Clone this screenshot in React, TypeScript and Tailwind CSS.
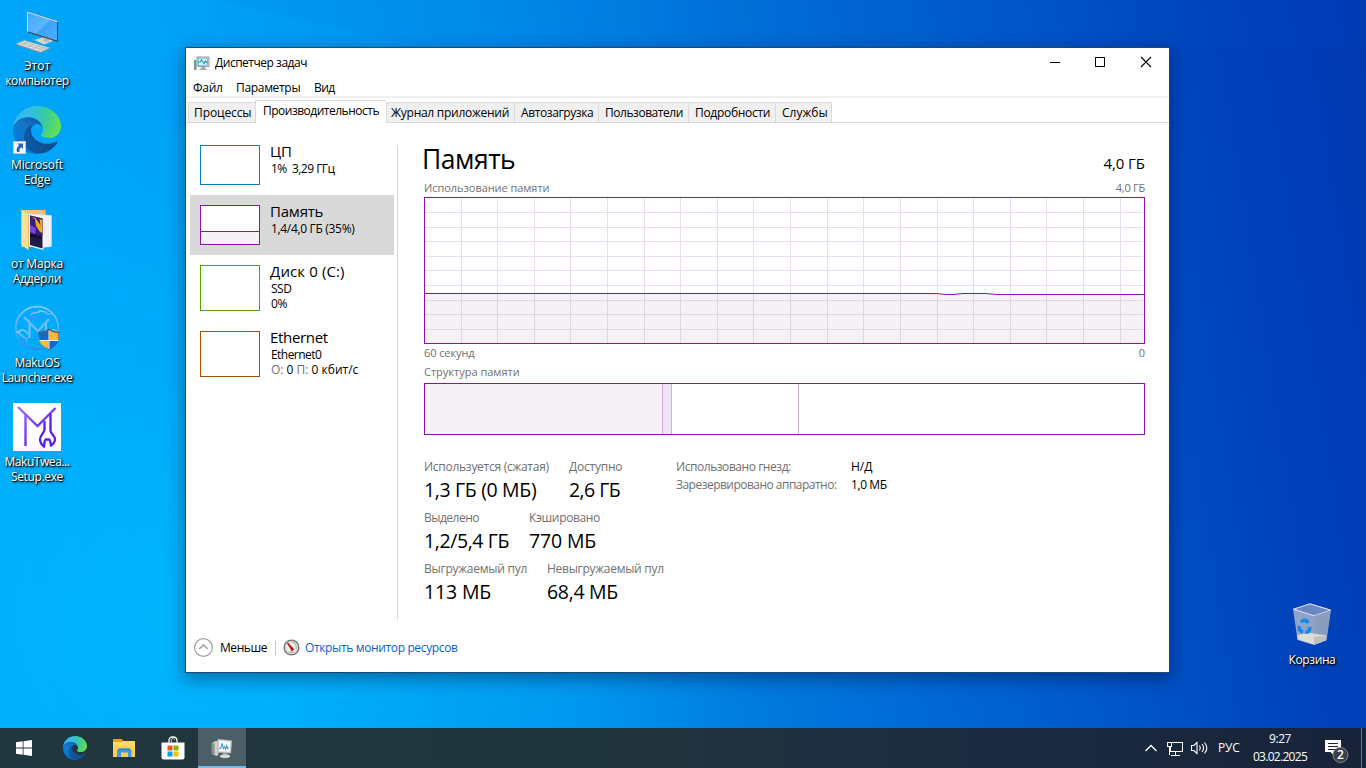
import type { ReactNode } from "react";

/* ---------- icons ---------- */

function EdgeLogo({ size, id }: { size: number; id: string }) {
  return (
    <svg width={size} height={size} viewBox="0 0 256 256">
      <defs>
        <linearGradient id={id + "a"} x1="60" y1="177" x2="240" y2="177" gradientUnits="userSpaceOnUse">
          <stop offset="0" stopColor="#0c59a4" />
          <stop offset="1" stopColor="#114a8b" />
        </linearGradient>
        <linearGradient id={id + "b"} x1="140" y1="90" x2="40" y2="220" gradientUnits="userSpaceOnUse">
          <stop offset="0" stopColor="#0f5fae" />
          <stop offset="0.3" stopColor="#1473c4" />
          <stop offset="0.7" stopColor="#0a7cd3" />
          <stop offset="1" stopColor="#0078d4" />
        </linearGradient>
        <radialGradient id={id + "c"} cx="26" cy="47" r="235" gradientUnits="userSpaceOnUse">
          <stop offset="0" stopColor="#35b9f1" />
          <stop offset="0.2" stopColor="#34bcea" />
          <stop offset="0.45" stopColor="#2fc2cc" />
          <stop offset="0.7" stopColor="#3fcf8e" />
          <stop offset="1" stopColor="#66e04e" />
        </radialGradient>
      </defs>
      <path fill={`url(#${id}b)`} d="M105.7 241.4c-8.9-5.5-16.6-12.8-22.7-21.3-26.3-36-18.4-86.5 17.6-112.8 3.8-2.7 7.7-5.2 11.9-7.2 3.1-1.5 8.4-4.1 15.5-4 10.1.1 19.6 4.9 25.7 13 4 5.4 6.3 11.9 6.4 18.7 0-.2 24.5-79.6-80-79.6-43.9 0-80 41.7-80 78.2-.2 19.3 4 38.5 12.1 56 27.6 58.8 94.8 87.6 156.4 67.1-21.1 6.6-44.1 3.7-62.9-8.1z" />
      <path fill={`url(#${id}a)`} d="M231 190.5c-3.4 1.8-6.9 3.4-10.5 4.7-11.5 4.3-23.6 6.5-35.9 6.5-47.3 0-88.5-32.5-88.5-74.3.1-11.4 6.4-21.9 16.4-27.3-42.8 1.8-53.8 46.4-53.8 72.5 0 73.9 68.1 81.3 82.7 81.3 7.9 0 19.8-2.3 27-4.6l1.3-.4c27.7-9.6 51.2-28.2 66.6-52.8 1.2-1.9.6-4.3-1.2-5.5-1.3-.8-2.9-.8-4.1-.1z" />
      <path fill={`url(#${id}c)`} d="M152.3 148.9c-.8 1-3.3 2.5-3.3 5.7 0 2.6 1.7 5.1 4.7 7.2 14.4 10 41.5 8.7 41.6 8.7 10.7 0 21.1-2.9 30.3-8.3 18.8-11 30.4-31.1 30.4-52.9.3-22.4-8-37.3-11.3-43.9C223.5 23.9 177.7 0 128 0 58 0 1 56.2 0 126.2c.5-36.5 36.8-66 80-66 3.500 0 23.500.3 42 10.1 16.300 8.600 24.900 18.900 30.800 29.200 6.200 10.700 7.300 24.100 7.300 29.500 0 5.300-2.700 13.300-7.800 19.900z" />
    </svg>
  );
}

function ComputerIcon() {
  return (
    <svg width="48" height="48" viewBox="0 0 48 48">
      <defs>
        <linearGradient id="scr" x1="0" y1="0" x2="1" y2="1">
          <stop offset="0" stopColor="#3fa6fb" />
          <stop offset="0.5" stopColor="#5db8ff" />
          <stop offset="0.52" stopColor="#3ba3fa" />
          <stop offset="1" stopColor="#4bb0ff" />
        </linearGradient>
      </defs>
      <path d="M21 33l10-3 9 4-9 3.500z" fill="#d3d6d8" />
      <path d="M30 30h6v5h-5z" fill="#b4b9bc" />
      <path d="M14.500 5.200l30 9.500v19.500l-30-9.500z" fill="url(#scr)" stroke="#7d8b94" strokeWidth="1" />
      <path d="M14.500 24.700V5.200l30 9.500" fill="none" stroke="#d4dde3" strokeWidth="1" />
      <path d="M15 25l29.500 9.200V15" fill="none" stroke="#3c4750" strokeWidth="1.100" />
      <path d="M3.500 37l8-3.500 25 7.500-9 4z" fill="#e4e4e4" stroke="#b8b8b8" strokeWidth="0.700" />
      <path d="M7 36l23 7M10 34.700l23 7M8 38.500l7-3.500M14 40.300l7-3.500M20 42l7-3.500M25 43.700l7-3.500" stroke="#a9a9a9" strokeWidth="0.700" />
      <path d="M3.500 37v1l24 8 9-4.200v-1l-9 4.500z" fill="#989898" />
    </svg>
  );
}

function FolderPhotoIcon() {
  return (
    <svg width="48" height="48" viewBox="0 -3 48 48">
      <path d="M8.500 2h24v37h-24z" fill="#eec569" />
      <path d="M22 6l16.500 1.500v31L24 40z" fill="#f0f1f2" stroke="#d4d8dc" strokeWidth="0.600" />
      <path d="M15.500 5.500l15 3.500v33l-15-4z" fill="#f7f7f7" />
      <path d="M17 7.500l12.500 3v30L17 37z" fill="#221a4b" />
      <path d="M17 7.500l12.500 3v17L17 25z" fill="#35207a" />
      <path d="M18 9l4 2 1 7 4 6 2.500 1V12l-3-1 1 6-5-7z" fill="#f2a526" />
      <path d="M17 17l6 3-1 6-5-2z" fill="#7b43e0" />
      <path d="M17 26l12 3v2l-12-2z" fill="#121029" />
      <path d="M8.500 2l7 4v36l-7-5z" fill="#fbdf94" />
      <path d="M15.500 6v36" stroke="#deb965" strokeWidth="0.800" />
    </svg>
  );
}

function LauncherIcon() {
  return (
    <svg width="48" height="48" viewBox="0 0 48 48">
      <defs>
        <linearGradient id="lg" x1="0" y1="0" x2="0" y2="1">
          <stop offset="0" stopColor="#86cbff" />
          <stop offset="1" stopColor="#2b8dfb" />
        </linearGradient>
      </defs>
      <g fill="none" stroke="url(#lg)" strokeWidth="1.700">
        <circle cx="24" cy="24" r="21.300" />
        <path d="M17 13c0-3 4-5 7-4 3-3 8-2 10 1h5M16 13c2 2 4-1 8 0 2 0 3 2 6 1" />
        <path d="M5 28c3-3 8-2 9 1 3 0 3 4 1 5M3 28c4-1 5 6 10 6 2 4-2 6 3 9" />
        <path d="M36 28l4-2 4 1" />
      </g>
      <path d="M11 13l5.500 5.500V34M16.500 18.500L25 27l11-12M33 19v9" fill="none" stroke="#74bdff" strokeWidth="2.200" />
      <path d="M36 24.500c3 2.500 6 3.200 10 3.200.4 8-1.500 14-10 18.300-8.500-4.300-10.800-10.300-10.500-18.300 4 0 7.500-.7 10.500-3.200z" fill="#575c60" />
      <path d="M35.500 26.300V36h-9.100c-.2-2-.2-4-.1-7 3.700 0 6.500-.8 9.200-2.700z" fill="#1269c9" />
      <path d="M36.500 26.300V36h8.700c.2-2 .2-4 0-7-3.500 0-6-.8-8.700-2.700z" fill="#fdb835" />
      <path d="M35.500 37v8c-5-2.300-8-4.500-8.900-8z" fill="#fdb835" />
      <path d="M36.500 37v8c5-2.300 7.700-4.500 8.600-8z" fill="#1269c9" />
      <path d="M36 26.500V45M26.300 36.500h19" stroke="#e9eef2" strokeWidth="1" />
    </svg>
  );
}

function TweakerIcon() {
  return (
    <svg width="48" height="48" viewBox="0 0 48 48">
      <defs>
        <linearGradient id="tw" x1="0" y1="0" x2="48" y2="48" gradientUnits="userSpaceOnUse">
          <stop offset="0" stopColor="#a97cff" />
          <stop offset="0.6" stopColor="#6a2cf5" />
          <stop offset="1" stopColor="#4a10e8" />
        </linearGradient>
      </defs>
      <rect width="48" height="48" fill="#fff" />
      <path d="M5 4l19.500 19L42.500 5M12.500 11v32" fill="none" stroke="url(#tw)" strokeWidth="2.400" />
      <path d="M31.500 18v8.500c0 3-4.500 6-4.500 9.500s2 6 4 7.500c.8-3-.2-6 1.800-7h3.400c1.800 1 1 4 1.800 6 2.500-1.500 4-3.500 4-6.500s-4.500-5.500-4.500-8.500V11" fill="none" stroke="#5a1cf0" strokeWidth="2.300" />
    </svg>
  );
}

function BinIcon() {
  return (
    <svg width="48" height="48" viewBox="0 0 48 48">
      <path d="M5 8l17-5.500 16 4.500 5 2-4.500 30L26 44 9.500 39z" fill="#a7b5cd" fillOpacity="0.85" />
      <path d="M5.500 8.200L22 2.800l20.500 6.400L26 14.800z" fill="#6b86c4" stroke="#e0e6ef" strokeWidth="1" />
      <path d="M26 15l16.500-5.500-4.200 30L26 44z" fill="#8b9dbd" />
      <path d="M9 34l13-2 16.500 2.500-.6 4.700L26 43.500 9.800 38.500z" fill="#dcdbd5" />
      <path d="M26 36l12.300-1.500-.4 4.700L26 43.500z" fill="#bfc0be" />
      <g fill="none" stroke="#1589e4" strokeWidth="3.800">
        <path d="M13.500 21.500c1.500-3 5-3 6.500.5" />
        <path d="M11.500 25c-1 3 .5 5 3.500 6" />
        <path d="M17.500 31c3 .5 4.500-2 4.200-5" />
      </g>
    </svg>
  );
}

function MonitorSmallIcon() {
  return (
    <svg width="18" height="15" viewBox="0 0 18 15" className="shrink-0">
      <path d="M1 4h2.500v10H1z" fill="#8b8f91" />
      <path d="M1 5h1.500v3H1z" fill="#4cc04a" />
      <rect x="4" y="1" width="12" height="9.500" fill="#d7dcdf" stroke="#8e969b" strokeWidth="0.900" />
      <rect x="5.500" y="2.300" width="9" height="6.900" fill="#e8f7fd" stroke="#62bfe8" strokeWidth="0.800" />
      <path d="M5.500 6h1.500l1.500-2 2.500 3.500L12.500 5l2 2" fill="none" stroke="#1f8bc9" strokeWidth="1.100" />
      <path d="M8.500 11H12v1.500h1.500V14h-7v-1.500h2z" fill="#a2a8ab" />
    </svg>
  );
}

function MonitorLargeIcon() {
  return (
    <svg width="24" height="23" viewBox="0 0 26 24">
      <path d="M2 6l4-2h3v15l-2 1-5-2z" fill="#cfcfcb" />
      <path d="M2 6l3 .5V19l-3-1z" fill="#8f9090" />
      <path d="M2.300 7.500l1.500.2v2l-1.500-.2z" fill="#5fd12f" />
      <path d="M8.500 2l15 1.500-1 13.500-14-.8z" fill="#dedede" stroke="#a5a8aa" strokeWidth="0.700" />
      <path d="M9.800 3.500l12.200 1.200-.8 10.500-11.400-.6z" fill="#f2f7fa" />
      <path d="M9.800 12l2-.5 1.200-5 1.500 5.500 1.500-2 1 2.500 1-3.500 1 3 1.500-1" fill="none" stroke="#3b92cf" strokeWidth="1.100" />
      <path d="M14 17l5 .3v2.500h-5z" fill="#b5b5b2" />
      <ellipse cx="16.300" cy="20.300" rx="5.500" ry="1.900" fill="#dcdcd8" stroke="#aaa" strokeWidth="0.500" />
    </svg>
  );
}

function ExplorerIcon() {
  return (
    <svg width="24" height="20" viewBox="0 0 24 20">
      <path d="M1 1h8.500l2 2H22v6H1z" fill="#e6a117" />
      <path d="M1 4h9l1.500-1H23v16H1z" fill="#ffd867" />
      <path d="M1 8h22v11H1z" fill="#fccf53" />
      <path d="M5 19v-6.500l2-2h10.500l2 2V19H16v-4.500H9V19z" fill="#3f9be4" />
      <path d="M7 10.500h10.500l1.500 2H5.500z" fill="#2f86d0" />
    </svg>
  );
}

function StoreIcon() {
  return (
    <svg width="24" height="24" viewBox="0 0 24 24">
      <path d="M8 6.500V4.500a3.500 3.500 0 013.500-3.500h1A3.500 3.500 0 0116 4.500v2" fill="none" stroke="#fff" strokeWidth="1.300" />
      <path d="M10.300 6.500V3.500l1.700-1 1.700 1" fill="none" stroke="#cfd6d9" strokeWidth="0.900" />
      <path d="M.5 6.500h23v15a2 2 0 01-2 2h-19a2 2 0 01-2-2z" fill="#fff" />
      <path d="M6.500 9.500h5v5h-5z" fill="#f25022" />
      <path d="M12.500 9.500h5v5h-5z" fill="#7fba00" />
      <path d="M6.500 15.500h5v5h-5z" fill="#00a4ef" />
      <path d="M12.500 15.500h5v5h-5z" fill="#ffb900" />
    </svg>
  );
}

function GaugeIcon() {
  return (
    <svg width="17" height="17" viewBox="0 0 17 17" className="shrink-0">
      <circle cx="8.500" cy="8.500" r="7.300" fill="#f1f1ee" stroke="#77797a" strokeWidth="1.500" />
      <circle cx="8.500" cy="8.500" r="5.700" fill="none" stroke="#c4c6c4" strokeWidth="0.900" />
      <path d="M9 3.500a5 5 0 014 6.500" fill="none" stroke="#9eb08a" strokeWidth="1" />
      <path d="M4.500 4l6 6.500-1.500 1z" fill="#cf1013" stroke="#cf1013" strokeWidth="1.200" />
      <path d="M6 13h5" stroke="#888" strokeWidth="0.800" />
    </svg>
  );
}

/* ---------- desktop ---------- */

function DesktopIcon({ icon, lines }: { icon: ReactNode; lines: [string, string][] }) {
  return (
    <div className="flex h-[99px] w-[74px] flex-col items-center gap-[3px]">
      {icon}
      <div className="flex flex-col items-center text-xs leading-[15px] whitespace-nowrap text-white [text-shadow:1px_1px_1px_#000,1px_1px_3px_#000]">
        {lines.map(([t, cls]) => (
          <span key={t} className={cls}>{t}</span>
        ))}
      </div>
    </div>
  );
}

/* ---------- task manager ---------- */

const tabs: [string, string, string][] = [
  ["Процессы", "w-[67px] pl-[5px]", "tracking-[-0.1px]"],
  ["Производительность", "", ""],
  ["Журнал приложений", "w-[128px] pl-1", "tracking-[-0.27px]"],
  ["Автозагрузка", "w-[84px] pl-1.5", "tracking-[-0.4px]"],
  ["Пользователи", "w-[90px] pl-1.5", "tracking-[-0.46px]"],
  ["Подробности", "w-[87px] pl-1.5", "tracking-[-0.3px]"],
  ["Службы", "w-[57px] border-r pl-1.5", ""],
];

function Tabs() {
  return (
    <div className="flex h-[25px] shrink-0 items-end border-b border-[#d9d9d9] pl-0.5">
      {tabs.map(([t, box, tr], i) =>
        i === 1 ? (
          <div key={t} className="-mb-px flex h-[23px] w-[131px] shrink-0 border-t border-l border-[#d9d9d9] bg-white pl-[7px]">
            <span className="leading-5 tracking-[-0.5px] whitespace-nowrap">{t}</span>
          </div>
        ) : (
          <div key={t} className={"flex h-5 shrink-0 border-t border-l border-[#d9d9d9] bg-[#f0f0f0] " + box}>
            <span className={"leading-5 whitespace-nowrap " + tr}>{t}</span>
          </div>
        ),
      )}
    </div>
  );
}

function SideItem({ box, title, tt, selected, height, thumb, children }: { box: string; title: string; tt: string; selected?: boolean; height: string; thumb?: ReactNode; children: ReactNode }) {
  return (
    <div className={"flex w-[204px] items-start gap-[11px] px-2.5 pt-2.5 " + height + (selected ? " bg-[#d9d9d9]" : "")}>
      <div className={"flex w-[60px] shrink-0 flex-col justify-end border bg-white " + box}>{thumb}</div>
      <div className="-mt-[3px] leading-[15px] whitespace-nowrap">
        <div className={"-ml-px h-[19px] text-[15px] leading-[18px] " + tt}>{title}</div>
        {children}
      </div>
    </div>
  );
}

const gridX = [37, 73, 110, 146, 183, 220, 256, 293, 329, 366, 403, 439, 476, 513, 549, 586, 622, 659, 696];
const gridY = [15, 30, 44, 59, 73, 88, 103, 117, 132];

function UsageChart() {
  return (
    <svg width="721" height="147" viewBox="0 0 721 147" className="block shrink-0">
      <rect width="721" height="147" fill="#fff" />
      <path d="M1 97h719v49H1z" fill="#f4f2f4" />
      <g shapeRendering="crispEdges">
        {gridX.map((x) => (
          <g key={x}>
            <rect x={x} y="1" width="1" height="95" fill="#ecdcf2" />
            <rect x={x} y="97" width="1" height="49" fill="#e2d3e6" />
          </g>
        ))}
        {gridY.map((y) => (
          <rect key={y} x="1" y={y} width="718" height="1" fill={y > 96 ? "#e2d3e6" : "#ecdcf2"} />
        ))}
        <rect x="0.500" y="0.500" width="720" height="146" fill="none" stroke="#8b12ae" />
      </g>
      <path d="M1 96.500h511l10 1h7l10-1h22l12 1h148" fill="none" stroke="#8b12ae" />
    </svg>
  );
}

function Stat({ label, value, w, lt, vt }: { label: string; value: string; w: string; lt: string; vt: string }) {
  return (
    <div className={"shrink-0 whitespace-nowrap " + w}>
      <div className={"h-[18px] leading-[18px] text-[#707070] " + lt}>{label}</div>
      <div className={"h-[33px] text-[19.500px] leading-7 " + vt}>{value}</div>
    </div>
  );
}

function TaskManager() {
  return (
    <div className="absolute top-[47px] left-[185px] flex h-[626px] w-[985px] flex-col border border-[#1c4a70] bg-white text-xs text-black shadow-[0_5px_16px_1px_rgba(0,10,40,0.4)]">
      <div className="flex h-[30px] shrink-0 items-center pl-[7px]">
        <MonitorSmallIcon />
        <span className="ml-1 flex-1 tracking-[-0.48px]">Диспетчер задач</span>
        <svg width="138" height="29" viewBox="0 0 138 29" shapeRendering="crispEdges" className="mr-px self-start">
          <path d="M20 14.500h10" stroke="#000" />
          <rect x="65.500" y="9.500" width="9" height="9" fill="none" stroke="#000" />
          <path d="M111 9l10 10M121 9l-10 10" stroke="#000" strokeWidth="1.100" shapeRendering="auto" />
        </svg>
      </div>
      <div className="flex h-5 shrink-0 items-center border-b-2 border-[#f0f0f0] pt-0.5 pl-[7px]">
        <span className="w-[43px] tracking-[-0.3px]">Файл</span>
        <span className="w-[78px] tracking-[-0.32px]">Параметры</span>
        <span className="tracking-[-0.6px]">Вид</span>
      </div>
      <Tabs />
      <div className="flex h-[497px] shrink-0">
        <div className="flex w-[211px] shrink-0 flex-col pt-3 pl-1">
          <SideItem title="ЦП" tt="" height="h-[60px]" box="h-10 border-[#117dbb]">
            <span className="tracking-[-0.52px]">1% &nbsp;3,29 ГГц</span>
          </SideItem>
          <SideItem title="Память" tt="tracking-[-0.2px]" selected height="h-[60px]" box="h-10 border-[#8b12ae]" thumb={<div className="h-[13px] border-t border-[#8b12ae] bg-[#f4f2f4]" />}>
            <span className="tracking-[-0.32px]">1,4/4,0 ГБ (35%)</span>
          </SideItem>
          <SideItem title="Диск 0 (C:)" tt="tracking-[0.12px]" height="h-[66px]" box="h-[46px] border-[#4da60c]">
            <div className="tracking-[-0.5px]">SSD</div>
            <div className="tracking-[-0.3px]">0%</div>
          </SideItem>
          <SideItem title="Ethernet" tt="tracking-[-0.32px]" height="h-[66px]" box="h-[46px] border-[#a74f01]">
            <div className="tracking-[-0.55px]">Ethernet0</div>
            <div><span className="text-[#707070]">О:</span> 0 <span className="text-[#707070]">П:</span> 0 кбит/с</div>
          </SideItem>
        </div>
        <div className="mt-[22px] h-[475px] w-px shrink-0 bg-[#d9d9d9]" />
        <div className="ml-[26px] flex w-[721px] flex-col pt-5 text-[#707070]">
          <div className="flex h-[38px] shrink-0 items-start justify-between text-black">
            <span className="-ml-0.5 text-[26.500px] leading-8 tracking-[-0.500px]">Память</span>
            <span className="text-[15px] leading-[40px] tracking-[-0.050px]">4,0 ГБ</span>
          </div>
          <div className="flex h-4 shrink-0 items-center justify-between pb-0.5 text-[11px]">
            <span className="tracking-[-0.05px]">Использование памяти</span>
            <span className="tracking-[-0.25px]">4,0 ГБ</span>
          </div>
          <UsageChart />
          <div className="flex h-[19px] shrink-0 items-center justify-between text-[11px]">
            <span className="tracking-[-0.1px]">60 секунд</span>
            <span>0</span>
          </div>
          <div className="flex h-5 shrink-0 text-[11px]">
            <span className="leading-[18px]">Структура памяти</span>
          </div>
          <div className="flex h-[52px] shrink-0 border border-[#8b12ae] bg-white">
            <div className="w-[238px] border-r border-[#cdb1d8] bg-[#f4f2f5]" />
            <div className="w-[9px] border-r border-[#cdb1d8] bg-[#efe4f4]" />
            <div className="w-[127px] border-r border-[#cdb1d8]" />
          </div>
          <div className="flex pt-[23px] text-black">
            <div className="flex w-[252px] shrink-0 flex-col">
              <div className="flex h-[51px]">
                <Stat label="Используется (сжатая)" value="1,3 ГБ (0 МБ)" w="w-[145px]" lt="tracking-[-0.27px]" vt="tracking-[-0.34px]" />
                <Stat label="Доступно" value="2,6 ГБ" w="w-[80px]" lt="tracking-[-0.22px]" vt="tracking-[-0.55px]" />
              </div>
              <div className="flex h-[51px]">
                <Stat label="Выделено" value="1,2/5,4 ГБ" w="w-[105px]" lt="tracking-[-0.5px]" vt="tracking-[-0.4px]" />
                <Stat label="Кэшировано" value="770 МБ" w="w-[80px]" lt="tracking-[-0.35px]" vt="tracking-[-0.15px]" />
              </div>
              <div className="flex h-[51px]">
                <Stat label="Выгружаемый пул" value="113 МБ" w="w-[123px]" lt="tracking-[-0.25px]" vt="tracking-[-0.15px]" />
                <Stat label="Невыгружаемый пул" value="68,4 МБ" w="w-[125px]" lt="tracking-[-0.28px]" vt="tracking-[-0.3px]" />
              </div>
            </div>
            <div className="w-[175px] shrink-0 leading-[18px] whitespace-nowrap text-[#707070]">
              <div className="tracking-[-0.45px]">Использовано гнезд:</div>
              <div className="tracking-[-0.52px]">Зарезервировано аппаратно:</div>
            </div>
            <div className="leading-[18px] whitespace-nowrap">
              <div>Н/Д</div>
              <div className="tracking-[-0.4px]">1,0 МБ</div>
            </div>
          </div>
        </div>
      </div>
      <div className="flex h-[52px] shrink-0 items-center pt-[3px] pl-2">
        <svg width="20" height="20" viewBox="0 0 20 20" className="shrink-0">
          <circle cx="9.500" cy="9.500" r="8.900" fill="none" stroke="#a0a0a0" strokeWidth="1.200" />
          <path d="M5.200 11l4.300-4.200 4.300 4.200" fill="none" stroke="#a0a0a0" strokeWidth="1.500" />
        </svg>
        <span className="ml-1.5 w-[54px] pt-px tracking-[-0.45px]">Меньше</span>
        <span className="ml-px h-3.5 w-px bg-[#c6c6c6]" />
        <span className="w-[7px]" />
        <GaugeIcon />
        <span className="ml-[5px] pt-px tracking-[-0.36px] text-[#0a5fd0]">Открыть монитор ресурсов</span>
      </div>
    </div>
  );
}

/* ---------- taskbar ---------- */

function Taskbar() {
  return (
    <div className="absolute bottom-0 left-0 flex h-10 w-full bg-[linear-gradient(90deg,#21363e_0%,#21353e_45%,#1b2c40_70%,#18233a_100%)] text-white">
      <div className="flex w-12 items-center justify-center">
        <svg width="16" height="16" viewBox="0 0 16 16" fill="#fff">
          <path d="M0 2.200L6.700 1.300v6.300H0zM7.500 1.200L16 0v7.600H7.500zM0 8.400h6.700v6.300L0 13.800zM7.500 8.400H16V16l-8.500-1.200z" />
        </svg>
      </div>
      <div className="flex w-[54px] items-center justify-center"><EdgeLogo size={24} id="et" /></div>
      <div className="flex w-[43px] items-center justify-center"><ExplorerIcon /></div>
      <div className="flex w-[53px] items-center justify-center pb-px pl-0.5"><StoreIcon /></div>
      <div className="flex w-12 items-center justify-center border-b-2 border-[#76b9ed] bg-[#4d5f66] pt-0.5"><MonitorLargeIcon /></div>
      <div className="flex-1" />
      <div className="flex items-center text-xs">
        <svg width="66" height="20" viewBox="0 0 66 20" fill="none" stroke="#fff">
          <path d="M1.500 13l5.500-5.500 5.500 5.500" strokeWidth="1.300" />
          <g shapeRendering="crispEdges">
            <path d="M28 4.500h10.500v9H26.500V9M31.500 14v3M27 17.500h9" />
            <path d="M23.500 4.500h4v4h-4zM25.500 9v8" />
          </g>
          <path d="M47.500 7.500h2.300l3.200-3v11l-3.200-3h-2.300z" strokeWidth="1.100" />
          <path d="M55.500 7.500c1 1.500 1 3.500 0 5M58 6c2 2.500 2 5.500 0 8M60.500 4.500c3 3.500 3 7.500 0 11" strokeWidth="1.100" />
        </svg>
        <span className="ml-[8px] w-[34px] tracking-[-0.2px]">РУС</span>
        <div className="flex w-[56px] flex-col items-center leading-[18px] whitespace-nowrap">
          <span className="tracking-[-0.4px]">9:27</span>
          <span className="tracking-[-0.7px]">03.02.2025</span>
        </div>
        <svg width="30" height="30" viewBox="0 0 30 30" className="ml-4">
          <path d="M1 7h16v12h-6.500v4L6.500 19H1z" fill="#fff" />
          <path d="M4 10.500h10M4 13.500h10M4 16.500h8" stroke="#1a2639" />
          <circle cx="16.500" cy="22" r="7.500" fill="#3c4148" stroke="#7d848c" />
          <text x="16.500" y="26.300" textAnchor="middle" fill="#fff" fontSize="12" fontWeight="600">2</text>
        </svg>
      </div>
      <div className="ml-[7px] w-[5px] border-l border-[#66707e]" />
    </div>
  );
}

export default function App() {
  return (
    <div className="relative h-[768px] w-[1366px] overflow-hidden bg-[#0078d7] font-['Open_Sans','Noto_Sans',sans-serif]">
      <div className="absolute inset-0 bg-[linear-gradient(81deg,#00a8fa_0%,#00a2f7_20%,#008feb_40%,#0070d8_58%,#0054c8_77%,#0041ba_90%,#0038b2_100%)]" />
      <div className="absolute inset-0 bg-[radial-gradient(ellipse_560px_500px_at_180px_620px,rgba(0,188,255,0.65),transparent)]" />
      <svg width="1366" height="768" viewBox="0 0 1366 768" className="absolute inset-0">
        <path d="M215 0L425 47H1366V0z" fill="#0060d0" fillOpacity="0.07" />
      </svg>
      <div className="absolute top-[7px] left-0 flex flex-col">
        <DesktopIcon icon={<ComputerIcon />} lines={[["Этот", ""], ["компьютер", "tracking-[-0.3px]"]]} />
        <DesktopIcon
          icon={
            <div className="relative h-12 w-12">
              <EdgeLogo size={48} id="ed" />
              <svg width="13" height="13" viewBox="0 0 13 13" className="absolute bottom-0 left-0">
                <rect x="0.500" y="0.500" width="12" height="12" fill="#f5f5f5" stroke="#c8c8c8" />
                <path d="M4.500 2.500h5.500V8L8.300 6.300C6.500 7.500 6.300 9 6.600 11H4C3 8 4 6 6.200 4.200z" fill="#2b62b5" />
              </svg>
            </div>
          }
          lines={[["Microsoft", "tracking-[-0.1px]"], ["Edge", "tracking-[-0.2px]"]]}
        />
        <DesktopIcon icon={<FolderPhotoIcon />} lines={[["от Марка", "tracking-[-0.2px]"], ["Аддерли", "tracking-[-0.2px]"]]} />
        <DesktopIcon icon={<LauncherIcon />} lines={[["MakuOS", "tracking-[-0.35px]"], ["Launcher.exe", "tracking-[-0.4px]"]]} />
        <DesktopIcon icon={<TweakerIcon />} lines={[["MakuTwea...", "tracking-[-0.45px]"], ["Setup.exe", "tracking-[-0.35px]"]]} />
      </div>
      <div className="absolute top-[601px] left-[1275px]">
        <DesktopIcon icon={<BinIcon />} lines={[["Корзина", "tracking-[-0.4px]"]]} />
      </div>
      <TaskManager />
      <Taskbar />
    </div>
  );
}
